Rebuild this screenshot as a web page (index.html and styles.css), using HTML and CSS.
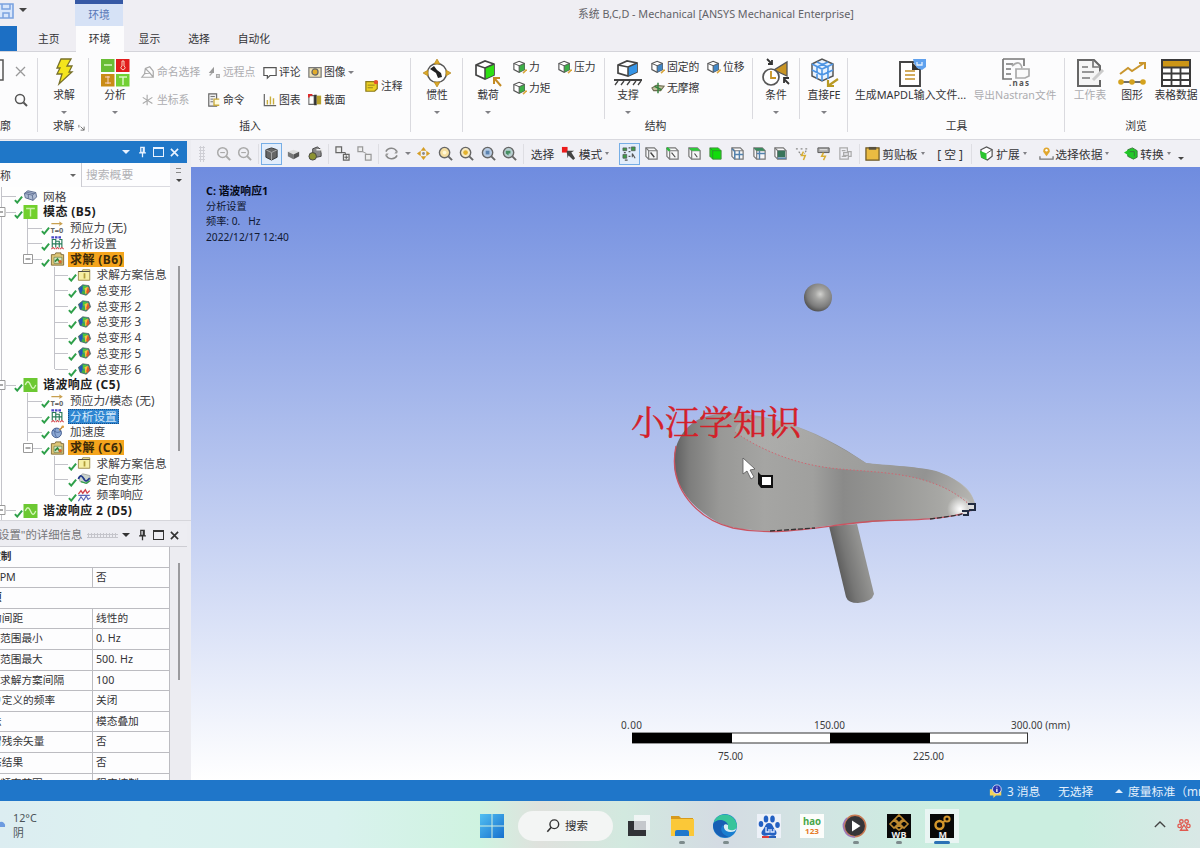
FILE: index.html
```html
<!DOCTYPE html>
<html lang="zh-CN">
<head>
<meta charset="utf-8">
<title>Mechanical</title>
<link rel="stylesheet" href="styles.css">
</head>
<body>
<svg class="defs" width="0" height="0">
  <defs>
    <symbol id="check" viewBox="0 0 10 10"><path d="M1 6.2 3.6 9 9 2.4" fill="none" stroke="#2fa04a" stroke-width="2.200"/></symbol>
    <symbol id="mesh" viewBox="0 0 16 16"><path d="M1 5 5 2l9 2 1 5-4 4-9-3z" fill="#aebbd2" stroke="#55658a"/><path d="M1 5l9 2 4-3M10 7l1 6M5.500 6v5M3 3.500l9 2" fill="none" stroke="#55658a" stroke-width=".9"/></symbol>
    <symbol id="modal" viewBox="0 0 16 16"><rect width="16" height="16" fill="#72d02c"/><path d="M3 4h10M8 4v9" stroke="#c9f2a8" stroke-width="1.600"/></symbol>
    <symbol id="harm" viewBox="0 0 16 16"><rect width="16" height="16" fill="#6cc832"/><path d="M2 8c2-5 4-5 6 0s4 5 6 0" fill="none" stroke="#d4f5ba" stroke-width="1.500"/></symbol>
    <symbol id="settings" viewBox="0 0 16 16"><path d="M1 1.500h11" stroke="#4a47c8" stroke-width="2.500" stroke-dasharray="3 1"/><path d="M2 13V4h4v9M6 6h4v7M10 4h3v9M2 9h11" fill="none" stroke="#287a5a" stroke-width="1.300"/><path d="M1 15l2-2 2 2M6 15l2-2 2 2M11 15l2-2 2 2" fill="none" stroke="#d3424a" stroke-width="1.200"/></symbol>
    <symbol id="solution" viewBox="0 0 16 16"><path d="M1 3h4l1-2h6v2h3v12H1z" fill="#dcc476" stroke="#7b6630"/><path d="M4 6h9v7H4z" fill="#d4e4c2" stroke="#5c7845" stroke-width=".7"/><path d="M5 11l3-3 2 3" fill="none" stroke="#2f8a3c" stroke-width="2"/><circle cx="11" cy="11" r="2" fill="#d9652a"/></symbol>
    <symbol id="info" viewBox="0 0 16 16"><path d="M1 4h4l1-2h8v12H1z" fill="#f6efa4" stroke="#97843e"/><path d="M1 4h13" stroke="#3a3a3a"/><path d="M8 6v6" stroke="#b19d38" stroke-width="2"/></symbol>
    <symbol id="deform" viewBox="0 0 16 16"><path d="M1 6l5-4 7 1 2 6-5 5-7-2z" fill="#2b8f8a" stroke="#444" stroke-width=".7"/><path d="M2 6l4-3v8l-3 0z" fill="#2753b8"/><path d="M6 3l5 0-3 4-2 2z" fill="#4fc63c"/><path d="M5 9l4 1 1 3-5-1z" fill="#3fae45"/><path d="M8 6l4-2 1 5-4 4z" fill="#f1c93a"/><path d="M12 4l2 5-3 4-1-3z" fill="#e2552c"/></symbol>
    <symbol id="direct" viewBox="0 0 16 16"><path d="M1 6l5-4 8 2 1 6-4 3-8-2z" fill="#cbd4cd" stroke="#888" stroke-width=".7"/><path d="M1 8c3-7 5-2 7 1s4 0 6-2" fill="none" stroke="#223a8c" stroke-width="2"/><path d="M4 11l6 2 4-3" fill="none" stroke="#2fa04a" stroke-width="1.500"/></symbol>
    <symbol id="freq" viewBox="0 0 16 16"><path d="M1 7l3-4 2 3 3-4 2 4 3-3" fill="none" stroke="#d0424c" stroke-width="1.500"/><path d="M1 15l3-5 3 4 3-5 2 4 3-2M1 8.500h13" fill="none" stroke="#5a68b8" stroke-width="1.300"/></symbol>
    <symbol id="accel" viewBox="0 0 16 16"><circle cx="7" cy="9" r="5.500" fill="#8ca8d4" stroke="#3a5488"/><path d="M3 6c4 3 6 3 9 1M6 4c-2 4-1 7 1 10" fill="none" stroke="#3a5488" stroke-width=".8"/><path d="M10 6l4-4" stroke="#b58335" stroke-width="1.500"/><circle cx="14" cy="2" r="1.500" fill="#dd9c3d"/></symbol>
    <symbol id="lens" viewBox="0 0 16 16"><circle cx="7" cy="7" r="5.200" fill="none" stroke="currentColor" stroke-width="1.600"/><path d="M10.700 10.700 15 15" stroke="currentColor" stroke-width="2"/><path d="M4.500 7h5" stroke="currentColor" stroke-width="1.200"/></symbol>
    <symbol id="cube" viewBox="0 0 16 16"><path d="M1 4 7 1.500 13 4v7l-6 3-6-3z" fill="#fff" stroke="#555" stroke-width="1.300"/><path d="M7 6.500 13 4v7l-6 3z" fill="currentColor"/><path d="M1 4l6 2.500L13 4M7 6.500V14" fill="none" stroke="#555" stroke-width="1.100"/><path d="M15.500 11l-4 4" stroke="#d9a63a" stroke-width="1.800"/></symbol>
    <symbol id="box" viewBox="0 0 16 16"><path d="M2 2h9l3 3v9H5l-3-3z" fill="#f7f7f8" stroke="#777" stroke-width="1.300"/><path d="M2 2l3 3h9M5 5v9" fill="none" stroke="#777" stroke-width="1.200"/></symbol>
    <symbol id="pin" viewBox="0 0 10 14"><path d="M3 1.500h4v6H3zM1 8h8M5 8v5" fill="none" stroke="currentColor" stroke-width="1.500"/><path d="M6 2v6" stroke="currentColor" stroke-width="1.500"/></symbol>
  </defs>
</svg>
<div class="app">
  <header class="titlebar">
    <svg class="save" viewBox="0 0 14 16"><path d="M-2 1h15v14H-2z" fill="#d8e6fb" stroke="#7ba3e0" stroke-width="1.600"/><path d="M2 1v5h8V1M3 15v-5h6v5" fill="none" stroke="#7ba3e0" stroke-width="1.500"/></svg>
    <i class="caret dark"></i>
    <div class="context">环境</div>
    <div class="wintitle">系统 B,C,D - Mechanical [ANSYS Mechanical Enterprise]</div>
  </header>
  <nav class="tabs"><b class="file"></b><span>主页</span><span class="on">环境</span><span>显示</span><span>选择</span><span>自动化</span></nav>

  <section class="ribbon">
    <div class="group g-outline">
      <div class="content">
        <svg width="36" height="60" viewBox="0 0 36 60"><path d="M-6 4H3v20h-9" fill="none" stroke="#555" stroke-width="1.500"/><path d="M16 11l9 9M25 11l-9 9" stroke="#999" stroke-width="1.300"/><circle cx="20" cy="43" r="4.500" fill="none" stroke="#555" stroke-width="1.500"/><path d="M23.500 46.500 27 50" stroke="#555" stroke-width="2"/></svg>
      </div>
      <div class="glabel left">廓</div>
    </div>
    <div class="group g-solve">
      <div class="content"><div class="big"><svg viewBox="0 0 30 30"><path d="M12 3h10l-4 7h5l-3 6h3L10 28l3-10H8l3-6H8z" fill="#f4e51c" stroke="#77702a" stroke-width="1.300"/></svg><span>求解</span><i class="caret"></i></div></div>
      <div class="glabel">求解<svg class="launch" viewBox="0 0 8 8"><path d="M1 1v3M3 3l4 4M7 3v4H3" fill="none" stroke="#666"/></svg></div>
    </div>
    <div class="group g-insert">
      <div class="content">
        <div class="big"><svg viewBox="0 0 30 30"><path d="M1 3h13.500v13H1z" fill="#69bd35"/><path d="M16 3h13.500v13H16z" fill="#e11d1d"/><path d="M1 18h13.500v12.500H1z" fill="#c98c16"/><path d="M16 18h13.500v12.500H16z" fill="#72d034"/><path d="M4 9h8M19 21h8M23 21v8" fill="none" stroke="#d9f6c4" stroke-width="1.500"/><path d="M22 5h2v5a2 2 0 1 1-2 0zM5 21h5M8 20v8M5 27h6" fill="none" stroke="#fbd0c0"/></svg><span>分析</span><i class="caret"></i></div>
        <div class="smalls wide c1">
          <span class="off"><svg viewBox="0 0 16 16"><path d="M1 14h13V7l-4-5-5 2-1 6zM4 10l6-1 4 5M5 4l5 5" fill="none" stroke="#aaa" stroke-width="1.400"/></svg>命名选择</span>
          <span class="off"><svg viewBox="0 0 16 16"><path d="M7 2v12M2 5l11 7M2 12l11-7" fill="none" stroke="#aaa" stroke-width="1.300"/></svg>坐标系</span>
        </div>
        <div class="smalls wide c2">
          <span class="off"><svg viewBox="0 0 16 16"><path d="M2 9 8 2v7z" fill="#999"/><path d="M3 12l3-3M11 11h3v3h-3z" stroke="#aaa" stroke-width="1.500" fill="none"/></svg>远程点</span>
          <span><svg viewBox="0 0 16 16"><path d="M2 1h9v14H2z" fill="#eee" stroke="#666" stroke-width="1.300"/><path d="M4 4h5M4 7h3M4 10h3" stroke="#666"/><path d="M14 7H8v7h6" fill="#fffbdc" stroke="#c7a93c" stroke-width="1.500"/></svg>命令</span>
        </div>
        <div class="smalls wide c3">
          <span><svg viewBox="0 0 16 16"><path d="M1 3h14v9H8l-3 3v-3H1z" fill="#fff" stroke="#555" stroke-width="1.400"/></svg>评论</span>
          <span><svg viewBox="0 0 16 16"><path d="M1.500 1v13.500H15" fill="none" stroke="#666" stroke-width="1.400"/><path d="M5 13V8M8.500 13V4M12 13V6" stroke="#c9ae3c" stroke-width="1.600"/></svg>图表</span>
        </div>
        <div class="smalls wide c4">
          <span><svg viewBox="0 0 16 16"><path d="M1 3h14v11H1z" fill="#eee2b6" stroke="#777" stroke-width="1.400"/><circle cx="8" cy="8" r="3.500" fill="#e2ac2a" stroke="#666" stroke-width="1.400"/></svg>图像<i class="caret"></i></span>
          <span><svg viewBox="0 0 16 16"><path d="M1 3h6v10H1z" fill="#fff" stroke="#666" stroke-width="1.200"/><path d="M7 2h3v12H7z" fill="#333"/><path d="M10 3h5v10h-5z" fill="#b7a12c"/><path d="M1 5V2h4" fill="none" stroke="#e12828" stroke-width="2"/></svg>截面</span>
        </div>
        <div class="smalls note"><span><svg viewBox="0 0 16 16"><path d="M1 3h13v8l-3 3H1z" fill="#ecd024" stroke="#8b7a1c" stroke-width="1.400"/><path d="M3 7h8M3 10h6" stroke="#8b7a1c"/><circle cx="12.500" cy="3.500" r="2.500" fill="#e3502d"/></svg>注释</span></div>
      </div>
      <div class="glabel">插入</div>
    </div>
    <div class="group g-inertia">
      <div class="content"><div class="big"><svg viewBox="0 0 30 30"><circle cx="15" cy="17" r="9.500" fill="#fff" stroke="#555" stroke-width="1.400"/><path d="M8 13l4-3 3 4 4 3 1 4-4 1-2-5z" fill="#222"/><path d="M15 3l3 5h-6zM15 31l3-5h-6zM1 17l5-3v6zM29 17l-5-3v6z" fill="#dba829" stroke="#a97d17" stroke-width=".6"/></svg><span>惯性</span><i class="caret"></i></div></div>
    </div>
    <div class="group g-struct">
      <div class="content">
        <div class="big b50"><svg viewBox="0 0 30 30"><path d="M3 9l9-4 9 3v11l-9 4-9-4z" fill="#fff" stroke="#444" stroke-width="1.700"/><path d="M12 12l9-4v11l-9 4z" fill="#2fe014"/><path d="M3 9l9 3 9-4M12 12v11" fill="none" stroke="#444" stroke-width="1.500"/><path d="M28 30l-6-7M21 28v-6h6" fill="none" stroke="#c38a22" stroke-width="2"/></svg><span>载荷</span><i class="caret"></i></div>
        <div class="smalls w45"><span class="green"><svg><use href="#cube"/></svg>力</span><span class="green"><svg><use href="#cube"/></svg>力矩</span></div>
        <div class="smalls w46"><span class="green"><svg><use href="#cube"/></svg>压力</span></div>
        <div class="vsep"></div>
        <div class="big b46"><svg viewBox="0 0 30 30"><path d="M5 9l9-4 10 2v9l-9 4-10-3z" fill="#fff" stroke="#444" stroke-width="1.700"/><path d="M15 11l9-4v9l-9 4z" fill="#3594e6"/><path d="M5 9l10 2 9-4M15 11v9" fill="none" stroke="#444" stroke-width="1.500"/><path d="M1 24h28" stroke="#444" stroke-width="2"/><path d="M5 25l-3 4M11 25l-3 4M17 25l-3 4M23 25l-3 4M28 25l-3 4" stroke="#444" stroke-width="1.300"/></svg><span>支撑</span><i class="caret"></i></div>
        <div class="smalls w56"><span class="blue"><svg><use href="#cube"/></svg>固定的</span><span><svg viewBox="0 0 16 16"><path d="M1 8l5-3 9 1-4 5-8 0z" fill="#c4c3a0" stroke="#6e6b51" stroke-width="1.200"/><path d="M8 2v12M4 6l8 4" stroke="#35833e" stroke-width="1.700"/></svg>无摩擦</span></div>
        <div class="smalls w45"><span class="blue"><svg><use href="#cube"/></svg>位移</span></div>
        <div class="vsep"></div>
        <div class="big b46"><svg viewBox="0 0 30 30"><path d="M26 6v14L13 14z" fill="#c99423" stroke="#555" stroke-width="1.300"/><circle cx="10" cy="21" r="8" fill="#fff" stroke="#555" stroke-width="1.700"/><path d="M10 15v7h5" fill="none" stroke="#c99423" stroke-width="1.800"/><path d="M6 3l5 5M11 4v4H7M28 28l-5-5M23 27v-5h5" fill="none" stroke="#333" stroke-width="1.800"/></svg><span>条件</span><i class="caret"></i></div>
        <div class="vsep"></div>
        <div class="big b48"><svg viewBox="0 0 30 30"><path d="M3 8 13 3l11 5v12l-11 5-10-5z" fill="#e9f2fd" stroke="#555" stroke-width="1.500"/><path d="M3 8l10 5 11-5M13 13v12M8 6l11 5v12M19 6 8 11v12M3 14l10 5 11-5" fill="none" stroke="#4d94e3" stroke-width="1.600"/><path d="M29 23l-10 7M19 24v6h6" fill="none" stroke="#b99a24" stroke-width="2.200"/></svg><span>直接FE</span><i class="caret"></i></div>
      </div>
      <div class="glabel">结构</div>
    </div>
    <div class="group g-tools">
      <div class="content">
        <div class="big b125"><svg viewBox="0 0 30 30"><path d="M4 6h20v24H4z" fill="#fff" stroke="#444" stroke-width="1.900"/><path d="M9 15h10M9 19h10M9 23h10" stroke="#c3912a" stroke-width="1.700"/><path d="M16 6l8 8h-8z" fill="#333"/><path d="M17 3h13v8l-4 3-5-2-3-5z" fill="#5fa1ee"/><path d="M21 6v3h5V6" fill="none" stroke="#e3f0ff" stroke-width="1.300"/></svg><span>生成MAPDL输入文件...</span></div>
        <div class="big b84 off"><svg viewBox="0 0 30 30"><path d="M3 3h21v7M3 3v20h9" fill="none" stroke="#777" stroke-width="1.700"/><path d="M6 8h7M6 13h5M6 18h5" stroke="#777" stroke-width="1.500"/><path d="M12 10q8-7 10 2M16 13h13v7l-4 2h-9z" fill="#fafafa" stroke="#aaa" stroke-width="1.700"/><text x="9" y="29.500" font-size="8" font-weight="bold" fill="#555" textLength="20">.nas</text></svg><span>导出Nastran文件</span></div>
      </div>
      <div class="glabel">工具</div>
    </div>
    <div class="group g-view">
      <div class="content">
        <div class="big b42 off"><svg viewBox="0 0 30 30"><path d="M25 16v-6l-6-6H3v26h22v-6" fill="#f5f5f5" stroke="#666" stroke-width="2"/><path d="M18 4v7h7M7 11h6M7 16h12M7 22h8" fill="none" stroke="#777" stroke-width="1.700"/><path d="M28 14 18 24" stroke="#ccc" stroke-width="3"/></svg><span>工作表</span></div>
        <div class="big b42"><svg viewBox="0 0 30 30"><path d="M3 18l8-6 4 3L27 7M22 7h6v6" fill="none" stroke="#c9962e" stroke-width="2"/><path d="M2 26h26" stroke="#555" stroke-width="1.700"/><circle cx="4" cy="26" r="2.800" fill="#d4a21e"/><circle cx="15" cy="26" r="2.800" fill="#d4a21e"/><circle cx="26" cy="26" r="2.800" fill="#d4a21e"/></svg><span>图形</span></div>
        <div class="big b46"><svg viewBox="0 0 30 30"><path d="M1 4h28v26H1z" fill="#fff" stroke="#3a3a3a" stroke-width="2"/><path d="M2 5h26v6H2z" fill="#cc9617"/><path d="M1 11.500h28M1 17.500h28M1 24h28M10.500 11v19M19.500 11v19" stroke="#3a3a3a" stroke-width="1.800"/></svg><span>表格数据</span></div>
      </div>
      <div class="glabel">浏览</div>
    </div>
  </section>

  <main class="work">
    <aside class="side">
      <div class="panelbar accent"><i class="caret"></i><svg class="pin"><use href="#pin"/></svg><i class="maxi"></i><svg class="close" viewBox="0 0 10 10"><path d="M1 1l8 8M9 1 1 9" stroke="currentColor" stroke-width="1.800"/></svg></div>
      <div class="filter"><div class="name">称<i class="caret dark"></i></div><div class="find">搜索概要</div><div class="more"><b></b><i class="caret dark"></i></div></div>
      <div class="treewrap">
        <div class="tree">
          <svg class="lines" viewBox="0 0 170 334"><path d="M1.500 0v334M1 9.500h15M6 25.500h10M6 198.500h10M6 323.500h10M27.500 32v35M27.500 206v48M28 41.500h14M28 56.500h14M33 72.500h9M28 214.500h14M28 230.500h14M28 245.500h14M33 261.500h9M54.500 80v102M54.500 269v39M55 88.500h13M55 103.500h13M55 119.500h13M55 135.500h13M55 151.500h13M55 166.500h13M55 182.500h13M55 277.500h13M55 292.500h13M55 308.500h13" fill="none" stroke="#c3c3c9"/><path d="M-4 20.500h9v9h-9zM23.500 67.500h9v9h-9zM-4 193.500h9v9h-9zM23.500 256.500h9v9h-9zM-4 318.500h9v9h-9z" fill="#fff" stroke="#999"/><path d="M-2 25h5M25.500 72h5M-2 198h5M25.500 261h5M-2 323h5" stroke="#555"/></svg>
          <div class="row l1"><svg class="ck"><use href="#check"/></svg><svg class="ic"><use href="#mesh"/></svg><span>网格</span></div>
          <div class="row l1 bold"><svg class="ck"><use href="#check"/></svg><svg class="ic"><use href="#modal"/></svg><span>模态 (B5)</span></div>
          <div class="row l2"><svg class="ck"><use href="#check"/></svg><svg class="ic" viewBox="0 0 16 16"><path d="M1 3h12M10 1l3 2-3 2" fill="none" stroke="#c8a050" stroke-width="1.200"/><text x="0" y="14" font-size="8.500" font-weight="bold" fill="#666">T=0</text></svg><span>预应力 (无)</span></div>
          <div class="row l2"><svg class="ck"><use href="#check"/></svg><svg class="ic"><use href="#settings"/></svg><span>分析设置</span></div>
          <div class="row l2 bold hot"><svg class="ck"><use href="#check"/></svg><svg class="ic"><use href="#solution"/></svg><span>求解 (B6)</span></div>
          <div class="row l3"><svg class="ck"><use href="#check"/></svg><svg class="ic"><use href="#info"/></svg><span>求解方案信息</span></div>
          <div class="row l3"><svg class="ck"><use href="#check"/></svg><svg class="ic"><use href="#deform"/></svg><span>总变形</span></div>
          <div class="row l3"><svg class="ck"><use href="#check"/></svg><svg class="ic"><use href="#deform"/></svg><span>总变形 2</span></div>
          <div class="row l3"><svg class="ck"><use href="#check"/></svg><svg class="ic"><use href="#deform"/></svg><span>总变形 3</span></div>
          <div class="row l3"><svg class="ck"><use href="#check"/></svg><svg class="ic"><use href="#deform"/></svg><span>总变形 4</span></div>
          <div class="row l3"><svg class="ck"><use href="#check"/></svg><svg class="ic"><use href="#deform"/></svg><span>总变形 5</span></div>
          <div class="row l3"><svg class="ck"><use href="#check"/></svg><svg class="ic"><use href="#deform"/></svg><span>总变形 6</span></div>
          <div class="row l1 bold"><svg class="ck"><use href="#check"/></svg><svg class="ic"><use href="#harm"/></svg><span>谐波响应 (C5)</span></div>
          <div class="row l2"><svg class="ck"><use href="#check"/></svg><svg class="ic" viewBox="0 0 16 16"><path d="M1 3h12M10 1l3 2-3 2" fill="none" stroke="#c8a050" stroke-width="1.200"/><text x="0" y="14" font-size="8.500" font-weight="bold" fill="#666">T=0</text></svg><span>预应力/模态 (无)</span></div>
          <div class="row l2 sel"><svg class="ck"><use href="#check"/></svg><svg class="ic"><use href="#settings"/></svg><span>分析设置</span></div>
          <div class="row l2"><svg class="ck"><use href="#check"/></svg><svg class="ic"><use href="#accel"/></svg><span>加速度</span></div>
          <div class="row l2 bold hot"><svg class="ck"><use href="#check"/></svg><svg class="ic"><use href="#solution"/></svg><span>求解 (C6)</span></div>
          <div class="row l3"><svg class="ck"><use href="#check"/></svg><svg class="ic"><use href="#info"/></svg><span>求解方案信息</span></div>
          <div class="row l3"><svg class="ck"><use href="#check"/></svg><svg class="ic"><use href="#direct"/></svg><span>定向变形</span></div>
          <div class="row l3"><svg class="ck"><use href="#check"/></svg><svg class="ic"><use href="#freq"/></svg><span>频率响应</span></div>
          <div class="row l1 bold"><svg class="ck"><use href="#check"/></svg><svg class="ic"><use href="#harm"/></svg><span>谐波响应 2 (D5)</span></div>
        </div>
        <div class="scroll"><b class="t1"></b></div>
      </div>
      <div class="panelbar gray"><span>设置"的详细信息</span><em></em><i class="caret"></i><svg class="pin"><use href="#pin"/></svg><i class="maxi"></i><svg class="close" viewBox="0 0 10 10"><path d="M1 1l8 8M9 1 1 9" stroke="currentColor" stroke-width="1.800"/></svg></div>
      <div class="detwrap">
        <div class="details">
          <div class="cap"><span class="cut10">控制</span></div>
          <div><span class="cut7">RPM</span><span>否</span></div>
          <div class="cap"><span class="cut9">项</span></div>
          <div><span class="cut9">的间距</span><span>线性的</span></div>
          <div><span>范围最小</span><span>0. Hz</span></div>
          <div><span>范围最大</span><span>500. Hz</span></div>
          <div><span>求解方案间隔</span><span>100</span></div>
          <div><span class="cut9">户定义的频率</span><span>关闭</span></div>
          <div><span class="cut9">法</span><span>模态叠加</span></div>
          <div><span class="cut9">留残余矢量</span><span>否</span></div>
          <div><span class="cut9">态结果</span><span>否</span></div>
          <div><span>频率范围</span><span>程序控制</span></div>
        </div>
        <div class="scroll"><b class="t2"></b></div>
      </div>
    </aside>
    <section class="stage">
      <div class="tools">
        <i class="grip"></i>
        <svg class="off"><use href="#lens"/></svg>
        <svg class="off"><use href="#lens"/></svg>
        <i class="bar"></i>
        <b class="picked"><svg viewBox="0 0 16 16"><path d="M2 4l6-2 6 2v8l-6 3-6-3z" fill="#666" stroke="#333"/><path d="M2 4l6 3 6-3M8 7v8" fill="none" stroke="#aaa"/></svg></b>
        <svg viewBox="0 0 16 16"><path d="M2 6l6-2 6 2v5l-6 3-6-3z" fill="#ddd"/><path d="M2 6l6 3v5l-6-3z" fill="#777"/><path d="M8 9l6-3v5l-6 3z" fill="#555"/></svg>
        <svg viewBox="0 0 16 16"><path d="M5 3l5-2 4 3v7l-5 1-4-3z" fill="#888" stroke="#444"/><circle cx="5" cy="11" r="4" fill="#8c9230" stroke="#444"/><path d="M9 4h6v3" fill="none" stroke="#eee" stroke-width="1.500"/></svg>
        <i class="bar"></i>
        <svg viewBox="0 0 16 16"><path d="M1 1h6v6H1zM9 9h6v6H9z" fill="#eee" stroke="#666" stroke-width="1.300"/><path d="M7 7h4v2M12 10v4M10 12h4" fill="none" stroke="#555"/></svg>
        <svg viewBox="0 0 16 16"><path d="M1 1h5v5H1zM9 9h6v6H9z" fill="#eee" stroke="#999" stroke-width="1.300"/><path d="M6 6l4 2" stroke="#999"/></svg>
        <i class="bar"></i>
        <svg viewBox="0 0 16 16"><path d="M2 6a6.500 6.500 0 0 1 12 1M14 10a6.500 6.500 0 0 1-12-1" fill="none" stroke="#888" stroke-width="1.600"/><path d="M14 4v4h-3zM2 12V8h3z" fill="#999"/></svg>
        <i class="caret"></i>
        <svg viewBox="0 0 16 16"><path d="M8 1l3 4H5zM8 15l3-4H5zM1 8l4-3v6zM15 8l-4-3v6z" fill="#d59e26"/><circle cx="8" cy="8" r="1.500" fill="#888"/></svg>
        <svg viewBox="0 0 16 16"><circle cx="7" cy="7" r="5.500" fill="#f6dfa1" stroke="#666" stroke-width="1.500"/><path d="M11 11l4 4" stroke="#666" stroke-width="2"/><circle cx="7" cy="7" r="2" fill="#fff7d8"/></svg>
        <svg viewBox="0 0 16 16"><circle cx="7" cy="7" r="5.500" fill="#f8ebc3" stroke="#666" stroke-width="1.500"/><path d="M11 11l4 4" stroke="#666" stroke-width="2"/><circle cx="7" cy="7" r="2.500" fill="#e2b22e"/></svg>
        <svg viewBox="0 0 16 16"><circle cx="7" cy="7" r="5.500" fill="#b8cbe2" stroke="#666" stroke-width="1.500"/><path d="M11 11l4 4" stroke="#666" stroke-width="2"/><path d="M5 5h4v4H5z" fill="#5c84b1"/></svg>
        <svg viewBox="0 0 16 16"><circle cx="7" cy="7" r="5.500" fill="#b8cfd0" stroke="#666" stroke-width="1.500"/><path d="M11 11l4 4" stroke="#666" stroke-width="2"/><path d="M4 8V5h5v3H7v2z" fill="#468f62"/></svg>
        <i class="bar"></i>
        <span class="pl4">选择</span>
        <svg viewBox="0 0 16 16"><path d="M1 1h6v6H1z" fill="#ec1c1c"/><path d="M6 5h8l-3 2 4 6-2 2-5-5-1 3z" fill="#444"/></svg>
        <span>模式<i class="caret"></i></span>
        <b class="picked"><svg viewBox="0 0 16 16"><path d="M1 2h4v3H1zM10 1h4v4h-4zM1 9h4v4H1z" fill="#3c9b48" stroke="#555" stroke-width=".8"/><path d="M7 2h2M7 6h2M2 7h2M7 11h2M3 15h3" stroke="#555" stroke-width="1.300"/><path d="M11 8l3 5M11 8v4" stroke="#555" stroke-width="1.200"/></svg></b>
        <svg viewBox="0 0 16 16"><use href="#box"/><path d="M7 7l4 5" stroke="#444" stroke-width="1.500"/></svg>
        <svg viewBox="0 0 16 16"><use href="#box"/><path d="M7 7l4 5" stroke="#444" stroke-width="1.200"/><path d="M2 2l3 3" stroke="#2cba3a" stroke-width="2.500"/></svg>
        <svg viewBox="0 0 16 16"><use href="#box"/><path d="M2 2h9l3 3H5z" fill="#2ec93b"/><path d="M8 8l3 4" stroke="#444" stroke-width="1.200"/></svg>
        <svg viewBox="0 0 16 16"><path d="M2 2h9l3 3v9H5l-3-3z" fill="#11dc0c" stroke="#4a8747"/><path d="M2 2l3 3h9M5 5v9" fill="none" stroke="#2b962b"/></svg>
        <svg viewBox="0 0 16 16"><use href="#box"/><path d="M2 3l3 3v8M5 9h9M10 5v9" fill="none" stroke="#5382ae" stroke-width="1.500"/></svg>
        <svg viewBox="0 0 16 16"><use href="#box"/><path d="M2 2h9l3 3H5z" fill="#3a8a5d"/><path d="M5 8h9M8 5v9" stroke="#5382ae" stroke-width="1.500"/></svg>
        <svg viewBox="0 0 16 16"><use href="#box"/><path d="M5 5h8v7H5z" fill="#38745a"/><path d="M5 13h9" stroke="#5382ae" stroke-width="1.500"/></svg>
        <svg viewBox="0 0 16 16"><path d="M1 3h3M6 3h3M11 3h3M4 6l3 4M12 5l-2 3" stroke="#888" stroke-width="1.300" stroke-dasharray="2 1"/><path d="M9 6l-2 4h4l-2 5" fill="none" stroke="#d8ae34" stroke-width="1.600"/></svg>
        <svg viewBox="0 0 16 16"><path d="M2 2h12v5H2z" fill="#aaa" stroke="#555"/><path d="M4 4h8" stroke="#eee"/><path d="M8 7l-2 4h4l-2 4" fill="none" stroke="#d8ae34" stroke-width="1.600"/></svg>
        <svg viewBox="0 0 16 16"><path d="M2 2h8v4h4v5h-3v3H2zM4 5h4M4 11h5M6 7h5v3H6z" fill="none" stroke="#aaa" stroke-width="1.300"/></svg>
        <i class="bar"></i>
        <svg viewBox="0 0 16 16"><path d="M1 2h14v13H1z" fill="#eabb42" stroke="#6c5724" stroke-width="1.300"/><path d="M4 1h8v3H4z" fill="#57503f"/></svg>
        <span>剪贴板<i class="caret"></i></span>
        <span class="pl9">[ 空 ]</span>
        <i class="bar"></i>
        <svg viewBox="0 0 16 16"><path d="M2 4l6-3 6 3v7l-5 4-6-3z" fill="#fff" stroke="#555" stroke-width="1.300"/><path d="M1 5l7 3v7l-6-3z" fill="#2bc52f"/><path d="M8 8l6-4" stroke="#555"/></svg>
        <span>扩展<i class="caret"></i></span>
        <svg viewBox="0 0 16 16"><path d="M8 11 4.500 6a3.500 4.500 0 1 1 7 0z" fill="#e0a62c"/><circle cx="8" cy="4.500" r="1.300" fill="#fff"/><path d="M1 11v3h14v-3" fill="none" stroke="#777" stroke-width="1.400"/></svg>
        <span>选择依据<i class="caret"></i></span>
        <svg viewBox="0 0 16 16"><path d="M4 4l5-2 5 3v7l-4 2-6-3z" fill="#20c727" stroke="#37783a"/><path d="M6 6h5v5" fill="none" stroke="#37783a"/><path d="M0 7l5-3v6z" fill="#20c727"/></svg>
        <span>转换<i class="caret"></i></span>
        <i class="caret dark low"></i>
      </div>
      <div class="view">
        <div class="anno"><b>C: 谐波响应1</b><span>分析设置</span><span class="pre">频率: 0.   Hz</span><span>2022/12/17 12:40</span></div>
        <svg class="scene" viewBox="191 167 1009 613">
          <defs>
            <radialGradient id="ball" cx=".58" cy=".38" r=".62"><stop offset="0" stop-color="#d2d2cf"/><stop offset=".3" stop-color="#a5a5a3"/><stop offset=".75" stop-color="#7c7c7c"/><stop offset="1" stop-color="#565656"/></radialGradient>
            <linearGradient id="seat" x1="674" x2="976" y1="0" y2="0" gradientUnits="userSpaceOnUse"><stop offset="0" stop-color="#5f5f5f"/><stop offset=".05" stop-color="#7d7d7c"/><stop offset=".15" stop-color="#989896"/><stop offset=".3" stop-color="#a5a5a3"/><stop offset=".46" stop-color="#a0a09e"/><stop offset=".56" stop-color="#8a8a89"/><stop offset=".68" stop-color="#949492"/><stop offset=".88" stop-color="#a7a7a4"/><stop offset="1" stop-color="#bdbdb8"/></linearGradient>
            <linearGradient id="top" x1="780" x2="965" y1="420" y2="510" gradientUnits="userSpaceOnUse"><stop offset="0" stop-color="#b2b2b0" stop-opacity=".55"/><stop offset=".5" stop-color="#9d9d9b"/><stop offset=".75" stop-color="#939392"/><stop offset="1" stop-color="#b5b4b0"/></linearGradient>
            <linearGradient id="post" x1="832" x2="864" y1="568" y2="560" gradientUnits="userSpaceOnUse"><stop offset="0" stop-color="#4e4e4e"/><stop offset=".5" stop-color="#777776"/><stop offset="1" stop-color="#939391"/></linearGradient>
            <radialGradient id="tip"><stop offset="0" stop-color="#fff"/><stop offset="1" stop-color="#fff" stop-opacity="0"/></radialGradient>
            <clipPath id="body"><path d="M674 462C674 440 687 423 704 417 724 410 757 413 782 422 813 430 841 446 866 463 878 466 924 466 940 473 960 480 974 491 975 506 968 515 938 519 906 520 871 522 834 524 806 529 785 532 744 532 724 525 698 514 674 489 674 462z"/></clipPath>
          </defs>
          <circle cx="818" cy="297.500" r="14" fill="url(#ball)"/>
          <path d="M829 526l17 71q2 6 12 6 14-1 16-9l-17-70z" fill="url(#post)"/>
          <path d="M674 462C674 440 687 423 704 417 724 410 757 413 782 422 813 430 841 446 866 463 878 466 924 466 940 473 960 480 974 491 975 506 968 515 938 519 906 520 871 522 834 524 806 529 785 532 744 532 724 525 698 514 674 489 674 462z" fill="url(#seat)"/>
          <path d="M735 432C765 453 802 466 840 469 883 473 937 472 973 508L975 503C969 487 952 476 936 471 915 466 883 465 866 463 838 445 812 431 780 421 756 415 735 419 735 432z" fill="url(#top)"/>
          <circle cx="960" cy="509" r="13" fill="url(#tip)" clip-path="url(#body)"/>
          <path d="M676 446C667 489 699 520 733 528 781 538 828 524 876 521 917 520 958 519 973 509" fill="none" stroke="#c95561" stroke-width="1.300"/>
          <path d="M770 531l45-3M930 519l29-4 14-5" fill="none" stroke="#333" stroke-width="1.300" stroke-dasharray="5 2"/>
          <path d="M735 432C765 453 802 466 840 469 883 473 937 472 973 508" fill="none" stroke="#cf6671" stroke-dasharray="1.500 2"/>
          <path d="M968 504h7v6h-6M962 511h6v4h-5" fill="#ddd" stroke="#222b40" stroke-width="2"/>
          <text x="631" y="435" class="mark" textLength="170">小汪学知识</text>
          <path d="M743 458v16l4-3 4 8 3-2-4-7 5-1z" fill="#fff" stroke="#555" stroke-width=".8"/>
          <path d="M758 472l3 3h12v13h-12l-3-4z" fill="#111"/><path d="M762 477h9v8h-9z" fill="#fff"/>
          <rect x="632.500" y="733" width="395" height="10" fill="#fff" stroke="#333"/><path d="M632 733h100v10H632zM830 733h100v10H830z"/>
          <g class="ruler"><text x="621" y="729" textLength="21">0.00</text><text x="814" y="729" textLength="31">150.00</text><text x="1011" y="729" textLength="59">300.00 (mm)</text><text x="718" y="759.500" textLength="25">75.00</text><text x="913" y="759.500" textLength="31">225.00</text></g>
        </svg>
      </div>
    </section>
  </main>

  <footer class="status">
    <svg viewBox="0 0 16 16"><path d="M1 6h13v7H8l-3 3v-3H1z" fill="#f2d35c"/><circle cx="9" cy="6" r="5" fill="#2834b0" stroke="#dfe5f5"/><path d="M9 3v1M9 5.500V9" stroke="#fff" stroke-width="1.500"/></svg>
    <span class="s1">3 消息</span><span class="s2">无选择</span><i class="up"></i><span class="s3">度量标准（mm</span>
  </footer>
  <footer class="taskbar">
    <div class="weather"><svg viewBox="0 0 8 14"><path d="M0 4a4 4 0 0 1 5 5H0z" fill="#6c9be0"/></svg><p>12°C<br>阴</p></div>
    <div class="cell"><svg viewBox="0 0 24 24"><defs><linearGradient id="win" x1="0" y1="0" x2="1" y2="1"><stop offset="0" stop-color="#52c0f2"/><stop offset="1" stop-color="#1670ce"/></linearGradient></defs><path d="M0 0h11.500v11.500H0zM12.500 0H24v11.500H12.500zM0 12.500h11.500V24H0zM12.500 12.500H24V24H12.500z" fill="url(#win)"/></svg></div>
    <div class="search"><svg viewBox="0 0 16 16"><circle cx="9.500" cy="6" r="5" fill="none" stroke="#333" stroke-width="1.600"/><path d="M6 9.500 1.500 14.500" stroke="#333" stroke-width="1.800"/></svg>搜索</div>
    <div class="cell"><svg viewBox="0 0 24 24"><path d="M1 7h18v15H1z" fill="#303236"/><path d="M7 1h16v15H7z" fill="#f6f7f8" fill-opacity=".85"/><path d="M7 7h12v9H7z" fill="#c5c8cc"/></svg></div>
    <div class="cell run"><svg viewBox="0 0 24 24"><path d="M1 2h8l2 2h12v5H1z" fill="#d79a1c"/><path d="M1 5h23v17H1z" fill="#fbc838"/><path d="M5 22v-4q0-2 2-2h10q2 0 2 2v4z" fill="#2078cc"/></svg></div>
    <div class="cell run"><svg viewBox="0 0 24 24"><circle cx="12" cy="12" r="12" fill="#1a7ed0"/><path d="M1 8C4-2 21-3 24 11c0 5-4 6-8 5-3-1-1-2-1-4 0-4-8-6-14-4z" fill="#38c49b"/><path d="M0 11C2 4 13 5 15 11c0 2-2 3 0 5-4 0-5-2-5-5-4 4-1 10 6 12-10 2-16-5-16-12z" fill="#185fb4"/><path d="M15 11c-3-2-5 0-4 3 1 4 7 5 11 3l2-4c-2 4-6 4-9 2z" fill="#d8eef4"/></svg></div>
    <div class="cell"><svg viewBox="0 0 24 24"><path d="M0 0h24v24H0z" fill="#edf1f8"/><g fill="#2360c2"><ellipse cx="9" cy="5" rx="2.300" ry="3.500"/><ellipse cx="15.500" cy="5" rx="2.300" ry="3.500"/><ellipse cx="4" cy="10" rx="2.300" ry="3"/><ellipse cx="20.500" cy="11" rx="2.300" ry="3"/><path d="M12 9c4 0 4 5 7 8 2 4-2 6-7 4-5 2-9 0-7-4 3-3 3-8 7-8z"/></g><path d="M9 13v5h3v-3M14 15v3h3v-3" fill="none" stroke="#dce8ff" stroke-width="1.300"/><path d="M5 22h7v2H5z" fill="#dc3a3a"/><path d="M12 22h7v2h-7z" fill="#285fb8"/></svg></div>
    <div class="cell"><svg viewBox="0 0 24 24"><path d="M0 0h24v24H0z" fill="#fcfdfb"/><text x="3" y="11" font-size="10" font-weight="bold" fill="#48a64a" textLength="18" lengthAdjust="spacingAndGlyphs">hao</text><text x="5" y="20" font-size="7" font-weight="bold" fill="#e67926" textLength="14" lengthAdjust="spacingAndGlyphs">123</text></svg></div>
    <div class="cell run"><svg viewBox="0 0 24 24"><circle cx="12" cy="12" r="10.700" fill="#353539" stroke="#c97952" stroke-width="1.500"/><path d="M4 4a11 11 0 0 0 8 19" fill="none" stroke="#9c78b9" stroke-width="1.500"/><path d="M9 6.500v11l8.500-5.500z" fill="#fff"/></svg></div>
    <div class="cell run"><svg viewBox="0 0 24 24"><path d="M0 0h24v24H0z" fill="#080808"/><path d="M12 1l4 4-4 4-4-4zM7 6l4 4-4 4-4-4zM17 6l4 4-4 4-4-4zM12 11l3 3-3 2-3-2z" fill="none" stroke="#bd8930" stroke-width="1.600"/><text x="4.500" y="24" font-size="9" font-weight="bold" fill="#eee" textLength="15">WB</text></svg></div>
    <div class="cell run active"><svg viewBox="0 0 24 24"><path d="M0 0h24v24H0z" fill="#080808"/><circle cx="9.500" cy="11" r="4" fill="none" stroke="#d3962c" stroke-width="2.500"/><circle cx="17" cy="5" r="2.600" fill="none" stroke="#d3962c" stroke-width="2"/><path d="M12 9l3-2" stroke="#d3962c" stroke-width="2"/><text x="8.500" y="24" font-size="9" font-weight="bold" fill="#eee">M</text></svg></div>
    <div class="tray"><svg viewBox="0 0 14 10"><path d="M1 8l6-6 6 6" fill="none" stroke="#444" stroke-width="1.500"/></svg><svg class="paw" viewBox="0 0 16 16"><g fill="none" stroke="#e0594f" stroke-width="1.500"><circle cx="5" cy="4" r="2"/><circle cx="11" cy="4" r="2"/><circle cx="3" cy="9" r="2"/><circle cx="13" cy="9" r="2"/><path d="M8 8l4 6H4z"/></g></svg></div>
  </footer>
</div>
</body>
</html>
```
FILE: styles.css
```css
* { box-sizing: border-box; }
body { margin: 0; width: 1200px; height: 848px; overflow: hidden; font: 10.8px/14px "Noto Sans", "Noto Sans CJK SC", sans-serif; color: #343437; }
svg { display: block; flex: none; overflow: visible; }
.defs { position: absolute; }
.app { display: flex; flex-direction: column; width: 1200px; height: 848px; overflow: hidden; white-space: nowrap; }
.caret { display: inline-block; flex: none; width: 0; height: 0; border: 3px solid transparent; border-top: 3.5px solid #808085; border-bottom: 0; }
.caret.dark { border-top-color: #444; }

.titlebar { display: flex; align-items: flex-start; height: 26px; background: #efeef3; }
.save { width: 14px; height: 16px; margin-top: 3px; overflow: hidden; }
.titlebar .caret { margin: 8px 0 0 5px; border-width: 4px 4px 0; }
.context { width: 48px; height: 26px; margin-left: 48px; border-top: 4px solid #3659a5; background: #d6e2f6; color: #5877b8; text-align: center; line-height: 21px; }
.wintitle { margin: 7px 0 0 455px; color: #626267; font-size: 10.8px; }
.tabs { display: flex; height: 26px; background: #efeef3; border-bottom: 1px solid #d4d4da; line-height: 25px; }
.file { width: 17px; background: #1c6fc4; margin-right: 21px; }
.tabs span { margin-right: 28px; }
.tabs .on { width: 48px; height: 26px; margin: 0 15px 0 -12px; text-align: center; background: #fcfcfd; }

.ribbon { display: flex; height: 88px; background: #fcfcfd; border-bottom: 1px solid #d9d9df; overflow: hidden; }
.group { display: flex; flex-direction: column; flex: none; position: relative; }
.group::after { content: ""; position: absolute; right: 0; top: 6px; height: 74px; border-right: 1px solid #dadadf; }
.content { display: flex; height: 67px; padding-top: 4px; }
.glabel { display: flex; justify-content: center; line-height: 14px; }
.glabel.left { justify-content: flex-start; }
.launch { width: 7px; height: 7px; margin: 5px -11px 0 4px; }
.g-outline { width: 38px; } .g-solve { width: 51px; } .g-insert { width: 322px; } .g-inertia { width: 52px; }
.g-struct { width: 385px; } .g-tools { width: 217px; } .g-view { width: 142px; }
.big { display: flex; flex-direction: column; align-items: center; width: 52px; flex: none; }
.big > svg { width: 30px; height: 30px; }
.big > span { margin-top: 2px; line-height: 14px; }
.big .caret { margin-top: 9px; }
.b46 { width: 46px; } .b48 { width: 48px; } .b50 { width: 50px; } .b42 { width: 42px; } .b125 { width: 125px; } .b84 { width: 84px; }
.b125 span { font-size: 10.9px; } .b84 span { font-size: 10.7px; }
.g-view .content { padding-left: 4px; }
.off { color: #acacb0; }
.vsep { width: 1px; height: 61px; margin-top: 2px; background: #dadadf; flex: none; }
.smalls { flex: none; }
.smalls span { display: flex; align-items: center; height: 21px; gap: 2px; }
.smalls span svg { width: 14px; height: 14px; }
.wide { padding-top: 2px; } .wide span { height: 28px; }
.c1 { width: 66px; } .c2 { width: 56px; } .c3 { width: 45px; } .c4 { width: 57px; }
.note { padding-top: 19px; }
.w45 { width: 45px; } .w46 { width: 46px; } .w56 { width: 56px; }
.green svg { color: #3bae45; } .blue svg { color: #4287c6; }

.work { display: flex; height: 640px; flex: none; }
.side { width: 191px; background: #ececf1; display: flex; flex-direction: column; flex: none; }
.panelbar { display: flex; align-items: center; justify-content: flex-end; width: 187px; height: 22px; margin-top: 1px; padding-right: 8px; flex: none; }
.panelbar.accent { background: #1f77c8; color: #e8f2ff; }
.panelbar .caret { border-width: 4px 4px 0; border-top-color: currentColor; }
.pin { width: 9px; height: 12px; margin: 0 6px 0 8px; }
.maxi { width: 11px; height: 10px; border: 1.500px solid currentColor; border-top-width: 2px; margin-right: 6px; }
.close { width: 9px; height: 9px; }
.filter { display: flex; height: 24px; flex: none; line-height: 23px; }
.name { display: flex; justify-content: space-between; align-items: center; width: 82px; padding-right: 5px; background: #fdfdfe; border-right: 1px solid #ccccd2; }
.name .caret { border-top-color: #666; }
.find { width: 88px; padding-left: 4px; background: #fdfdfe; color: #b3b3b7; font-size: 11.8px; border-bottom: 1px solid #dadae0; }
.more { display: flex; flex-direction: column; align-items: center; width: 17px; padding-top: 5px; gap: 6px; }
.more b { width: 5px; height: 5px; border: solid #888; border-width: 1px 0; }
.treewrap { display: flex; height: 334px; flex: none; border-bottom: 1px solid #d6d6db; }
.tree { position: relative; width: 170px; height: 333px; padding-top: 1.300px; background: #fefefe; overflow: hidden; }
.lines { position: absolute; left: 0; top: 0; width: 170px; height: 334px; }
.row { position: relative; display: flex; align-items: center; height: 15.730px; font-size: 11.7px; line-height: 15px; color: #434346; }
.l1 { padding-left: 14px; } .l2 { padding-left: 41px; } .l3 { padding-left: 67.500px; }
.ck { width: 9px; height: 10px; margin-top: 5px; }
.ic { width: 15px; height: 14px; margin-right: 3px; }
.row span { padding: 0 2px; }
.bold { font-weight: bold; font-size: 12px; letter-spacing: .4px; color: #1d1d1d; }
.hot span { background: #f4a41c; color: #3c2a08; padding-right: 1px; }
.sel span { background: #2f86d1; color: #d5e9fb; outline: 1px dotted #16508a; outline-offset: -1px; }
.scroll { width: 17px; padding-left: 8px; }
.scroll b { display: block; width: 2px; background: #9a9a9e; }
.t1 { margin-top: 79px; height: 185px; } .t2 { margin-top: 16px; height: 117px; }
.panelbar.gray { margin-top: 3px; height: 23px; color: #333; background: #ededf2; border-bottom: 1px solid #cdcdd3; }
.gray span { color: #77777a; font-size: 11.4px; margin-left: -2px; margin-right: auto; }
.gray em { width: 31px; height: 5px; margin-right: 4px; background: radial-gradient(circle, #c5c5cb 1px, transparent 1.200px) 0 0 / 3px 3px; }
.detwrap { display: flex; height: 233px; overflow: hidden; }
.details { width: 170px; background: #fdfdfe; border-right: 1px solid #bcbcc1; }
.details div { display: flex; height: 20.620px; border-bottom: 1px solid #bcbcc1; line-height: 19px; font-size: 10.700px; }
.details span { width: 92px; overflow: hidden; }
.details span + span { width: 77px; border-left: 1px solid #bcbcc1; padding-left: 3px; }
.cap { font-weight: bold; } .cut10 { text-indent: -10px; } .cut7 { text-indent: -7px; } .cut9 { text-indent: -9px; }

.stage { width: 1009px; display: flex; flex-direction: column; }
.tools { display: grid; height: 27px; align-items: center; justify-items: center; background: #f0f0f5;
  grid-template-columns: 21.500px 21.600px 21.600px 5.500px repeat(3, 21.600px) 6px 21.600px 21.600px 6px 21.600px 10px repeat(5, 21.600px) 6px 32px 20px 40px repeat(11, 21.600px) 6px 20px 46px 38px 10px 20px 41px 18px 68px 17px 36px 10px; }
.tools svg { width: 15px; height: 15px; }
.tools span { justify-self: start; display: flex; align-items: center; gap: 3px; font-size: 11.800px; }
.tools span .caret { border-width: 3px 2.500px 0; }
.pl4 { padding-left: 4px; } .tools .pl9 { padding-left: 9px; white-space: pre; }
.tools .off { color: #aaa; }
.grip { width: 6px; height: 16px; background: radial-gradient(circle, #cfcfd5 1px, transparent 1.200px) 0 0 / 3px 3px; }
.bar { width: 1px; height: 20px; background: #dedee3; }
.picked { display: grid; place-items: center; width: 21px; height: 22px; border: 1px solid #76aee6; background: #e2edfb; }
.low { margin-top: 10px; }
.view { position: relative; height: 613px; background: linear-gradient(#6f8cdf, #ffffff); }
.scene { position: absolute; left: 0; top: 0; width: 1009px; height: 613px; }
.anno { display: flex; flex-direction: column; padding: 16px 0 0 15px; line-height: 15.600px; font-size: 10.200px; color: #101830; }
.anno b { font-size: 10.800px; color: #050a18; } .pre { white-space: pre; }
.mark { font: 34px "Liberation Serif", "Noto Serif CJK SC", "Noto Sans CJK SC", serif; fill: #d42028; stroke: #d42028; stroke-width: .5; }
.ruler text { font-size: 10px; fill: #3c3c40; }

.status { display: flex; align-items: center; height: 21px; flex: none; padding-left: 989px; background: #1f76c9; color: #e3effb; font-size: 11.800px; overflow: hidden; }
.status svg { width: 14px; height: 14px; }
.status span { flex: none; }
.s1 { margin-left: 4px; width: 51px; } .s2 { width: 57px; }
.up { flex: none; border: 4px solid transparent; border-top: 0; border-bottom: 4px solid #e3effb; margin-right: 5px; }
.taskbar { display: flex; align-items: center; height: 47px; flex: none; background: linear-gradient(90deg, #dcedf1, #dcf2f0 12%, #d9f2ee 28%, #cff3e0 40%, #dfe1dd 45%, #d2e9df 52%, #d4dbe3 60%, #d3e2e3 66%, #cbeee0 78%, #cbeee0 90%, #d9e8e6); }
.weather { display: flex; align-items: center; width: 470px; height: 47px; gap: 5px; font-size: 10.800px; line-height: 15px; color: #4a5357; }
.weather svg { width: 8px; height: 14px; } .weather p { margin: 0; }
.cell { position: relative; display: grid; place-items: center; width: 43.300px; height: 47px; flex: none; padding-top: 2px; }
.cell svg { width: 24px; height: 24px; }
.run::after { content: ""; position: absolute; left: 19px; bottom: 4px; width: 6px; height: 3px; border-radius: 2px; background: #7d8b8c; }
.active svg { outline: 5px solid #e9f5f3; }
.active::after { left: 14px; width: 16px; background: #2b72b5; }
.search { display: flex; align-items: center; gap: 5px; width: 95px; height: 30px; margin: 2px 4.200px 0 4.700px; padding-left: 28px; border-radius: 15px; background: #f3f5f4; color: #333; font-size: 11.500px; }
.search svg { width: 14px; height: 14px; }
.tray { display: flex; align-items: center; gap: 11px; margin-left: 190px; }
.tray svg { width: 12px; height: 9px; } .tray .paw { width: 14px; height: 14px; }
```
